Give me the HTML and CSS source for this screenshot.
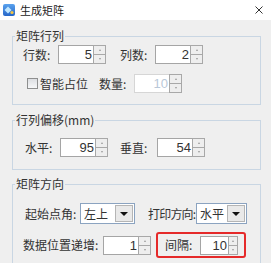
FILE: index.html
```html
<!DOCTYPE html>
<html lang="zh-CN">
<head>
    <meta charset="UTF-8">
    <title>生成矩阵</title>
    <link rel="stylesheet" href="styles.css">
</head>
<body>
    <!-- Title bar -->
    <div class="titlebar">
        <svg class="app-icon" viewBox="0 0 12 12" aria-hidden="true">
            <defs>
                <linearGradient id="ig" x1="0" y1="0" x2="0" y2="1">
                    <stop offset="0" stop-color="#5aa2ee"/>
                    <stop offset="1" stop-color="#2566c8"/>
                </linearGradient>
            </defs>
            <rect x="0" y="0" width="12" height="12" rx="2" fill="url(#ig)"/>
            <path d="M5 2.5 L8.5 6 L5 9.5 L1.5 6 Z" fill="#bfe6ff"/>
            <circle cx="9" cy="8.5" r="1.6" fill="#f5c542"/>
        </svg>
        <span class="title">生成矩阵</span>
        <svg class="close" viewBox="0 0 8 8" aria-hidden="true">
            <path d="M0.5 0.5 L7.5 7.5 M7.5 0.5 L0.5 7.5" stroke="#333" stroke-width="1"/>
        </svg>
    </div>

    <div class="dialog">
        <!-- 矩阵行列 -->
        <fieldset class="group g1">
            <legend>矩阵行列</legend>
            <div class="row row-g1a">
                <span class="lbl w35">行数:</span>
                <span class="spin"><span class="spin-val">5</span><span class="spin-btns"><i class="up"></i><i class="down"></i></span></span>
                <span class="lbl w35 gap14">列数:</span>
                <span class="spin"><span class="spin-val">2</span><span class="spin-btns"><i class="up"></i><i class="down"></i></span></span>
            </div>
            <div class="row row-g1b">
                <span class="check"></span>
                <span class="check-lbl">智能占位</span>
                <span class="lbl w35 gap11">数量:</span>
                <span class="spin disabled"><span class="spin-val">10</span><span class="spin-btns"><i class="up"></i><i class="down"></i></span></span>
            </div>
        </fieldset>

        <!-- 行列偏移 -->
        <fieldset class="group g2">
            <legend>行列偏移(mm)</legend>
            <div class="row row-g2">
                <span class="lbl w35">水平:</span>
                <span class="spin"><span class="spin-val">95</span><span class="spin-btns"><i class="up"></i><i class="down"></i></span></span>
                <span class="lbl w37 gap12">垂直:</span>
                <span class="spin"><span class="spin-val">54</span><span class="spin-btns"><i class="up"></i><i class="down"></i></span></span>
            </div>
        </fieldset>

        <!-- 矩阵方向 -->
        <fieldset class="group g3">
            <legend>矩阵方向</legend>
            <div class="row row-g3a">
                <span class="lbl w55">起始点角:</span>
                <span class="combo w-combo1"><span class="combo-val">左上</span><span class="combo-btn"></span></span>
                <span class="lbl w48 tight gap13">打印方向:</span>
                <span class="combo w-combo2"><span class="combo-val">水平</span><span class="combo-btn"></span></span>
            </div>
            <div class="row row-g3b">
                <span class="lbl w80">数据位置递增:</span>
                <span class="spin"><span class="spin-val">1</span><span class="spin-btns"><i class="up"></i><i class="down"></i></span></span>
                <span class="highlight">
                    <span class="lbl w35">间隔:</span>
                    <span class="spin narrow"><span class="spin-val">10</span><span class="spin-btns"><i class="up"></i><i class="down"></i></span></span>
                </span>
            </div>
        </fieldset>
    </div>
</body>
</html>
```

FILE: styles.css
```css
/* General Styles */
body {
    margin: 0;
    width: 271px;
    height: 263px;
    overflow: hidden;
    background-color: #efefef;
    font-family: "Noto Sans CJK SC", sans-serif;
    font-size: 12px;
    color: #333;
}

/* Title bar */
.titlebar {
    height: 20px;
    background-color: #fff;
    display: flex;
    align-items: center;
    padding-left: 3px;
}

.app-icon {
    width: 12px;
    height: 12px;
    margin-right: 5px;
}

.title {
    flex: 1;
    font-size: 11px;
    line-height: 14px;
    color: #222;
}

.close {
    width: 8px;
    height: 8px;
    margin-right: 8px;
}

/* Group boxes */
.dialog {
    padding-left: 12px;
}

.group {
    box-sizing: border-box;
    width: 249px;
    min-width: 0;
    margin: 0;
    padding: 0;
    border: 1px solid #c9d6e3;
}

.group legend {
    margin-left: 2px;
    padding: 0 1px;
    font-size: 12px;
    line-height: 14px;
    color: #333;
}

.g1 {
    margin-top: 9px;
    padding: 2px 0 11px;
}

.g2 {
    margin-top: 8px;
    padding: 11px 0 12px;
}

.g3 {
    margin-top: 7px;
    padding: 12px 0 8px;
}

/* Rows */
.row {
    display: flex;
    align-items: center;
    height: 19px;
}

.row-g1a { padding-left: 10px; }
.row-g1b { padding-left: 14px; margin-top: 10px; }
.row-g2 { padding-left: 12px; }
.row-g3a { padding-left: 12px; height: 21px; }
.row-g3b { padding-left: 10px; height: 26px; margin-top: 8px; }

.lbl {
    flex: none;
    line-height: 16px;
    white-space: nowrap;
}

.lbl.tight {
    letter-spacing: -0.8px;
}

.w35 { width: 35px; }
.w37 { width: 37px; }
.w48 { width: 48px; }
.w55 { width: 55px; }
.w80 { width: 80px; }
.gap11 { margin-left: 11px; }
.gap12 { margin-left: 12px; }
.gap13 { margin-left: 13px; }
.gap14 { margin-left: 14px; }

/* Checkbox */
.check {
    box-sizing: border-box;
    width: 11px;
    height: 11px;
    border: 1px solid #8e8f8f;
    background: linear-gradient(#dcdee2, #f6f7f8);
}

.check-lbl {
    margin-left: 2px;
    width: 48px;
    line-height: 16px;
}

/* Spinner */
.spin {
    display: flex;
    flex: none;
    width: 48px;
    height: 19px;
}

.spin-val {
    box-sizing: border-box;
    flex: 1;
    border: 1px solid #a5a5a5;
    border-right: none;
    background-color: #fff;
    text-align: right;
    padding-right: 1px;
    font-family: "Liberation Sans", Arial, sans-serif;
    font-size: 13px;
    line-height: 17px;
    color: #333;
}

.spin-btns {
    display: flex;
    flex-direction: column;
    width: 13px;
}

.spin-btns i {
    box-sizing: border-box;
    flex: 1;
    border: 1px solid #a8a8a8;
    background-color: #eeeeee;
    display: flex;
    align-items: center;
    justify-content: center;
}

.spin-btns i + i {
    border-top: none;
}

.spin-btns i::after {
    content: "";
    width: 0;
    height: 0;
    border-left: 1.5px solid transparent;
    border-right: 1.5px solid transparent;
}

.spin-btns .up::after {
    border-bottom: 2px solid #9a9a9a;
}

.spin-btns .down::after {
    border-top: 2px solid #9a9a9a;
}

.spin.narrow {
    width: 38px;
}

.spin.narrow .spin-btns {
    width: 10px;
}

.spin.disabled .spin-val {
    border-color: #d6d6d6;
    color: #b9c8d8;
}

/* Combo box */
.combo {
    box-sizing: border-box;
    display: flex;
    flex: none;
    height: 21px;
    border: 1px solid #8ba3c0;
    background-color: #fff;
}

.w-combo1 { width: 55px; }
.w-combo2 { width: 51px; }

.combo-val {
    flex: 1;
    padding-left: 3px;
    line-height: 19px;
    color: #333;
}

.combo-btn {
    width: 16px;
    margin: 1px;
    border: 1px solid #b5b5b5;
    background-color: #e9e9e9;
    display: flex;
    align-items: center;
    justify-content: center;
}

.combo-btn::after {
    content: "";
    border-left: 4px solid transparent;
    border-right: 4px solid transparent;
    border-top: 4px solid #111;
}

/* Highlight frame */
.highlight {
    box-sizing: border-box;
    display: flex;
    align-items: center;
    width: 90px;
    height: 26px;
    margin-left: 5px;
    padding-left: 7px;
    border: 2px solid #e52a2a;
    border-radius: 3px;
}
```
